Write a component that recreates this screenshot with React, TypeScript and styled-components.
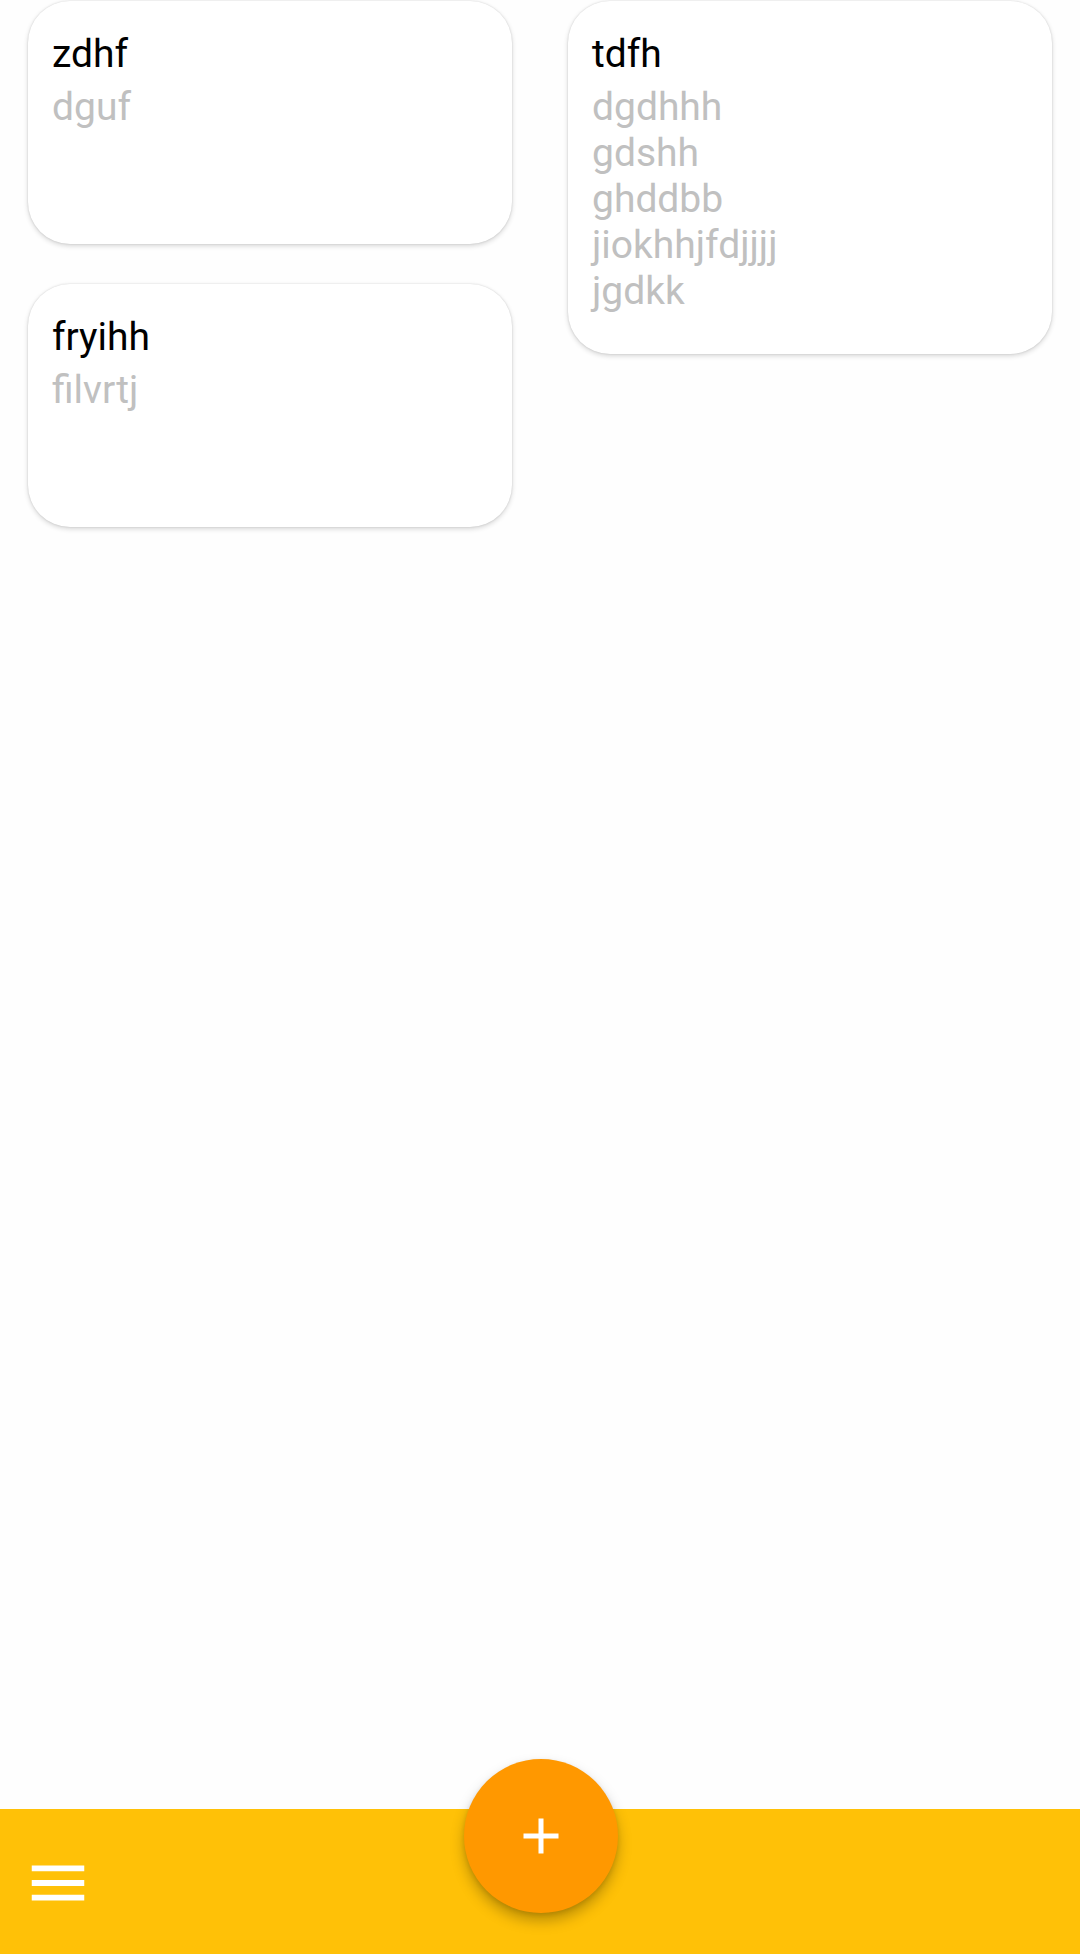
import React from "react";
import styled, { createGlobalStyle } from "styled-components";

const GlobalStyle = createGlobalStyle`
  * { box-sizing: border-box; }
  body { margin: 0; background: #fefefe; font-family: Roboto, sans-serif; }
`;

const Screen = styled.div`
  min-height: 100vh;
  display: flex;
  flex-direction: column;
`;

const Board = styled.main`
  flex: 1;
  display: grid;
  grid-template-columns: 1fr 1fr;
  align-items: start;
  gap: 56px;
  padding: 1px 28px 40px;
`;

const Column = styled.div`
  display: flex;
  flex-direction: column;
  gap: 40px;
`;

const Card = styled.article`
  min-height: 243px;
  padding: 30px 24px 40px;
  border-radius: 42px;
  background: #fff;
  box-shadow: 0 2px 5px rgba(0, 0, 0, 0.16), 0 0 2px rgba(0, 0, 0, 0.14);
`;

const Title = styled.h2`
  margin: 0 0 7px;
  font-size: 39px;
  line-height: 46px;
  font-weight: 400;
  color: #000;
`;

const Body = styled.p`
  margin: 0;
  font-size: 39px;
  line-height: 46px;
  color: #c0c0c0;
  white-space: pre-line;
`;

const BottomBar = styled.footer`
  position: relative;
  display: flex;
  align-items: center;
  height: 145px;
  padding: 2px 23px 0;
  background: #ffc107;
`;

const MenuButton = styled.button`
  display: flex;
  padding: 0;
  border: 0;
  background: none;
`;

const AddButton = styled.button`
  position: absolute;
  top: -50px;
  left: 50%;
  margin-left: -76px;
  display: grid;
  place-items: center;
  width: 154px;
  height: 154px;
  padding: 0;
  border: 0;
  border-radius: 50%;
  background: #ff9800;
  box-shadow: 0 8px 14px rgba(0, 0, 0, 0.26), 0 2px 4px rgba(0, 0, 0, 0.1);
`;

const columns = [
  [
    { title: "zdhf", body: "dguf" },
    { title: "fryihh", body: "filvrtj" },
  ],
  [{ title: "tdfh", body: "dgdhhh\ngdshh\nghddbb\njiokhhjfdjjjj\njgdkk" }],
];

export default function App() {
  return (
    <Screen>
      <GlobalStyle />
      <Board>
        {columns.map((notes, i) => (
          <Column key={i}>
            {notes.map((note) => (
              <Card key={note.title}>
                <Title>{note.title}</Title>
                <Body>{note.body}</Body>
              </Card>
            ))}
          </Column>
        ))}
      </Board>
      <BottomBar>
        <MenuButton type="button" aria-label="Menu">
          <svg width="70" height="70" viewBox="0 0 24 24" fill="#fff">
            <path d="M3 18h18v-2H3v2zm0-5h18v-2H3v2zm0-7v2h18V6H3z" />
          </svg>
        </MenuButton>
        <AddButton type="button" aria-label="Add note">
          <svg width="60" height="60" viewBox="0 0 24 24" fill="#fff">
            <path d="M19 13h-6v6h-2v-6H5v-2h6V5h2v6h6v2z" />
          </svg>
        </AddButton>
      </BottomBar>
    </Screen>
  );
}
